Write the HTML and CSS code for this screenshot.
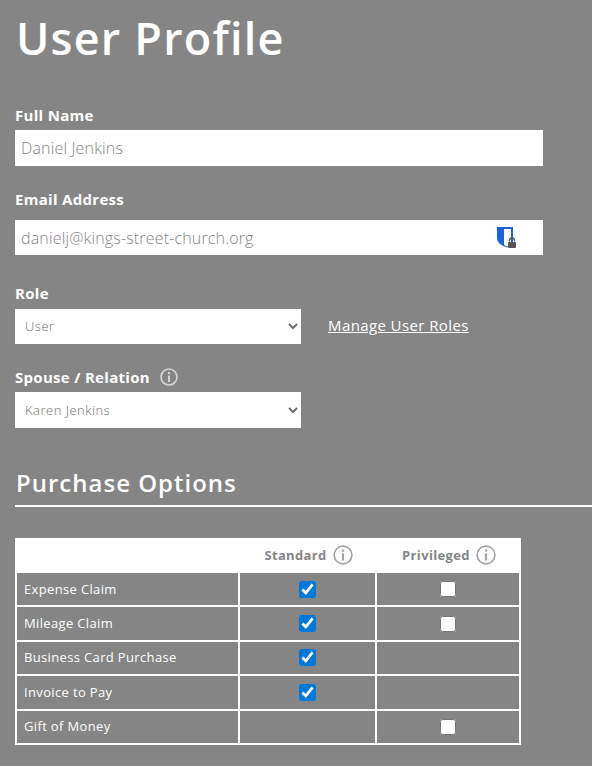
FILE: index.html
```html
<!DOCTYPE html>
<html lang="en">
<head>
<meta charset="utf-8">
<title>User Profile</title>
<link rel="stylesheet" href="styles.css">
</head>
<body>
<main class="page">
  <h1 class="title">User Profile</h1>
  <form class="form">
    <label class="label label-name" for="name">Full Name</label>
    <input class="input" id="name" type="text" placeholder="Daniel Jenkins">

    <label class="label label-email" for="email">Email Address</label>
    <div class="input-wrap">
      <input class="input input-email" id="email" type="text" placeholder="danielj@kings-street-church.org">
      <svg class="shield" viewBox="0 0 22 22" width="22" height="22" aria-hidden="true">
        <path d="M1 0H17V14C17 17 13 19.500 11 20.500C6 18.500 1 16 1 11Z" fill="#1a62e0"/>
        <path d="M8 2H15V17L11 19.500L8 18Z" fill="#fff"/>
        <path d="M13.500 14.500V13.500a2.500 2.500 0 0 1 5 0V14.500" fill="none" stroke="#555" stroke-width="1.400"/>
        <rect x="12" y="15" width="8" height="6" rx="1" fill="#555"/>
      </svg>
    </div>

    <label class="label label-role" for="role">Role</label>
    <div class="role-row">
      <select class="select" id="role"><option>User</option></select>
      <a class="manage" href="#">Manage User Roles</a>
    </div>

    <label class="label label-spouse" for="spouse">Spouse / Relation
      <svg class="info info-light" viewBox="0 0 18 18" width="18" height="18" aria-hidden="true">
        <circle cx="9" cy="9" r="8" fill="none" stroke="currentColor" stroke-width="1.600"/>
        <rect x="8" y="7.500" width="2" height="6.500" fill="currentColor"/>
        <rect x="8" y="4" width="2" height="2" fill="currentColor"/>
      </svg>
    </label>
    <select class="select select-tall" id="spouse"><option>Karen Jenkins</option></select>
  </form>

  <h2 class="section">Purchase Options</h2>

  <table class="grid">
    <thead>
      <tr>
        <th class="col-name"></th>
        <th class="col-std"><span class="head">Standard
          <svg class="info" viewBox="0 0 18 18" width="20" height="20" aria-hidden="true"><circle cx="9" cy="9" r="8" fill="none" stroke="currentColor" stroke-width="1.500"/><rect x="8" y="7.500" width="2" height="6.500" fill="currentColor"/><rect x="8" y="4" width="2" height="2" fill="currentColor"/></svg></span></th>
        <th class="col-priv"><span class="head">Privileged
          <svg class="info" viewBox="0 0 18 18" width="20" height="20" aria-hidden="true"><circle cx="9" cy="9" r="8" fill="none" stroke="currentColor" stroke-width="1.500"/><rect x="8" y="7.500" width="2" height="6.500" fill="currentColor"/><rect x="8" y="4" width="2" height="2" fill="currentColor"/></svg></span></th>
      </tr>
    </thead>
    <tbody>
      <tr><td>Expense Claim</td><td class="c"><input type="checkbox" checked></td><td class="c"><input type="checkbox"></td></tr>
      <tr><td>Mileage Claim</td><td class="c"><input type="checkbox" checked></td><td class="c"><input type="checkbox"></td></tr>
      <tr><td>Business Card Purchase</td><td class="c"><input type="checkbox" checked></td><td class="c"></td></tr>
      <tr><td>Invoice to Pay</td><td class="c"><input type="checkbox" checked></td><td class="c"></td></tr>
      <tr><td>Gift of Money</td><td class="c"></td><td class="c"><input type="checkbox"></td></tr>
    </tbody>
  </table>
</main>
</body>
</html>
```
FILE: styles.css
```css
* { box-sizing: border-box; }
html, body { margin: 0; padding: 0; }
body {
  background: #858585;
  color: #fff;
  font-family: "Open Sans", "Liberation Sans", sans-serif;
  height: 766px;
  overflow: hidden;
}
.page { padding-left: 15px; }
.title {
  margin: 0;
  padding-top: 7px;
  padding-left: 1px;
  font-size: 45px;
  line-height: 61px;
  font-weight: 600;
  letter-spacing: 1.2px;
}
.form { display: flex; flex-direction: column; align-items: flex-start; }
.label {
  display: flex;
  align-items: center;
  font-size: 15px;
  font-weight: 700;
  line-height: 20px;
  letter-spacing: 0.3px;
}
.label-name { margin-top: 37px; margin-bottom: 5px; }
.label-email { margin-top: 23px; margin-bottom: 11px; }
.label-role { margin-top: 28px; margin-bottom: 6px; }
.label-spouse { margin-top: 23px; margin-bottom: 5px; }
.input {
  display: block;
  width: 528px;
  height: 36px;
  border: 0;
  border-radius: 0;
  padding: 0 6px;
  background: #fff;
  font-family: inherit;
  font-size: 16px;
  font-weight: 300;
  letter-spacing: 0.16px;
}
.input::placeholder { color: #858585; opacity: 1; }
.input-wrap { position: relative; width: 528px; }
.input-email { height: 35px; }
.shield { position: absolute; left: 481px; top: 7px; }
.role-row { display: flex; align-items: center; gap: 27px; }
.select {
  display: block;
  width: 286px;
  height: 35px;
  border: 0;
  border-radius: 0;
  padding: 0 6px 2px;
  background-color: #fff;
  color: #6e6e6e;
  font-family: inherit;
  font-size: 13px;
  font-weight: 300;
  letter-spacing: 0.5px;
}
.select-tall { height: 36px; padding-bottom: 0; }
.manage {
  margin-bottom: 3px;
  color: #fff;
  font-size: 15px;
  letter-spacing: 0.4px;
}
.info { flex: none; }
.info-light { margin-left: 10px; color: #d6d6d6; }
.section {
  margin: 38px 0 0;
  padding-left: 1px;
  height: 41px;
  width: 577px;
  border-bottom: 2px solid #fff;
  font-size: 24px;
  line-height: 34px;
  font-weight: 600;
  letter-spacing: 1px;
}
.grid {
  margin-top: 31px;
  width: 506px;
  border-collapse: separate;
  border-spacing: 0;
  table-layout: fixed;
  border: 2px solid #fff;
  border-top: 0;
  font-size: 13px;
}
.col-name { width: 221px; }
.col-std { width: 137px; }
.grid th {
  height: 33px;
  padding: 0;
  background: #fff;
  color: #858585;
  font-size: 13px;
  font-weight: 700;
  letter-spacing: 0.35px;
}
.head { display: inline-flex; align-items: center; justify-content: center; gap: 6px; padding-left: 4px; }
.grid .info { color: #a3a3a3; }
.grid td {
  height: 34.400px;
  padding: 0 0 0 7px;
  border-top: 2px solid #fff;
  border-left: 2px solid #fff;
  letter-spacing: 0.35px;
  line-height: 1;
}
.grid td:first-child { border-left: 0; }
.grid td.c { text-align: center; padding: 0; }
.grid input {
  display: block;
  width: 17px;
  height: 17px;
  margin: 0 auto;
  accent-color: #0078d7;
}
.grid input:not(:checked) { width: 16px; height: 16px; }
```
